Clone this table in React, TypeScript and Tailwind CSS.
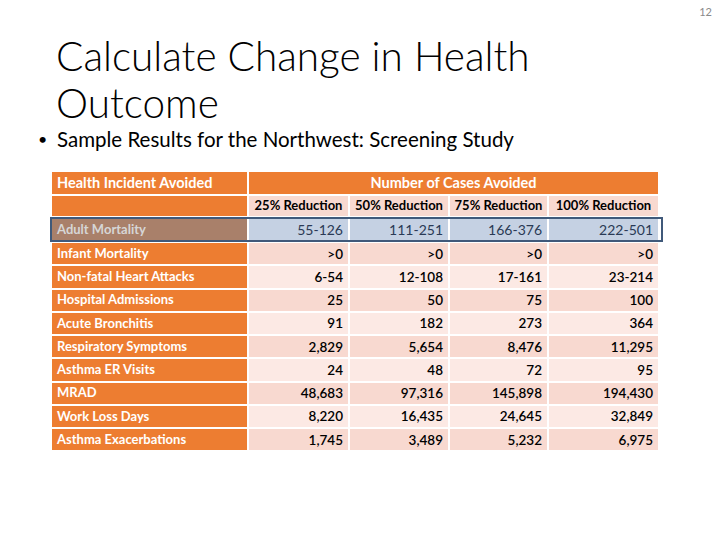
const cols = "grid grid-cols-[195px_99px_98px_97px_109px] gap-x-[2px]";

type Row = { name: string; values: string[] };

const rows: Row[] = [
  { name: "Infant Mortality", values: [">0", ">0", ">0", ">0"] },
  { name: "Non-fatal Heart Attacks", values: ["6-54", "12-108", "17-161", "23-214"] },
  { name: "Hospital Admissions", values: ["25", "50", "75", "100"] },
  { name: "Acute Bronchitis", values: ["91", "182", "273", "364"] },
  { name: "Respiratory Symptoms", values: ["2,829", "5,654", "8,476", "11,295"] },
  { name: "Asthma ER Visits", values: ["24", "48", "72", "95"] },
  { name: "MRAD", values: ["48,683", "97,316", "145,898", "194,430"] },
  { name: "Work Loss Days", values: ["8,220", "16,435", "24,645", "32,849"] },
  { name: "Asthma Exacerbations", values: ["1,745", "3,489", "5,232", "6,975"] },
];

const headers = ["25% Reduction", "50% Reduction", "75% Reduction", "100% Reduction"];

export default function App() {
  return (
    <div className="relative h-[540px] w-[720px] overflow-hidden bg-white font-['Lato',sans-serif] text-black">
      <div className="absolute right-[8px] top-[4px] text-[11px] text-[#8a8a8a]">12</div>

      <div className="pl-[56px] pt-[32px]">
        <h1 className="text-[40.5px] font-light leading-[47px] text-black">
          Calculate Change in Health
          <br />
          Outcome
        </h1>
      </div>

      <div className="mt-[1px] flex items-center pl-[38px] text-[20.5px] leading-[24px]">
        <span className="w-[19px] text-[16px]">•</span>
        <span>Sample Results for the Northwest: Screening Study</span>
      </div>

      <div className="ml-[52px] mt-[21px] w-[605px] text-[13px]">
        <div className={`${cols} h-[20px]`}>
          <div className="flex items-center bg-[#ed7d31] pl-[5px] text-[14.5px] font-bold text-white">
            Health Incident Avoided
          </div>
          <div className="col-span-4 flex items-center justify-center bg-[#ed7d31] text-[14.5px] font-bold text-white">
            Number of Cases Avoided
          </div>
        </div>

        <div className={`${cols} mt-[4px] h-[19px]`}>
          <div className="bg-[#ed7d31]" />
          {headers.map((h) => (
            <div key={h} className="flex items-center justify-center bg-[#f8d9d0] font-bold">
              {h}
            </div>
          ))}
        </div>

        <div className={`${cols} mt-[4px] h-[21px] w-[609px] outline outline-2 outline-[#40597a]`}>
          <div className="flex items-center bg-[#a9806a] pl-[5px] font-bold text-[#d6d6d6]">
            Adult Mortality
          </div>
          {["55-126", "111-251", "166-376", "222-501"].map((v, i) => (
            <div
              key={i}
              className="flex items-center justify-end bg-[#c5d1e3] pr-[5px] text-[14px] text-[#2a3a55]"
            >
              {v}
            </div>
          ))}
        </div>

        <div className="mt-[3px] flex flex-col gap-y-[2px]">
          {rows.map((r, ri) => (
            <div key={r.name} className={`${cols} h-[21.25px]`}>
              <div className="flex items-center bg-[#ed7d31] pl-[5px] font-bold text-white">
                {r.name}
              </div>
              {r.values.map((v, i) => (
                <div
                  key={i}
                  className={`flex items-center justify-end pr-[5px] text-[13.5px] font-semibold ${
                    ri % 2 === 0 ? "bg-[#f8d9d0]" : "bg-[#fce9e4]"
                  }`}
                >
                  {v}
                </div>
              ))}
            </div>
          ))}
        </div>
      </div>
    </div>
  );
}
